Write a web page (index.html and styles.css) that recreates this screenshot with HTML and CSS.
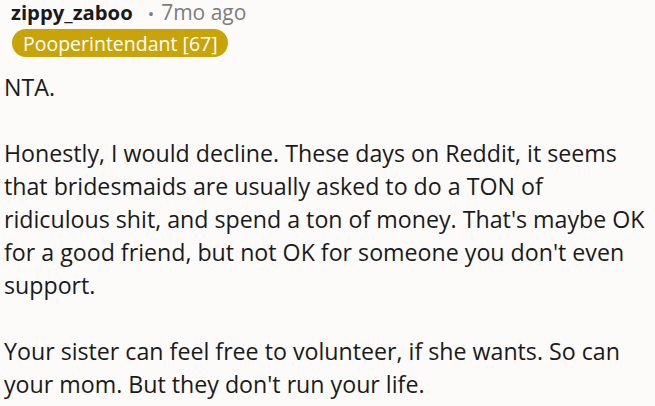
FILE: index.html
```html
<!DOCTYPE html>
<html lang="en">
<head>
<meta charset="utf-8">
<link rel="stylesheet" href="styles.css">
</head>
<body>
<article class="comment">
  <header class="meta">
    <span class="user">zippy_zaboo</span>
    <span class="dot">•</span>
    <span class="time">7mo ago</span>
  </header>
  <div class="flair-row"><span class="flair">Pooperintendant [67]</span></div>
  <div class="body">
    <p>NTA.</p>
    <p>Honestly, I would decline. These days on Reddit, it seems<br>that bridesmaids are usually asked to do a TON of<br>ridiculous shit, and spend a ton of money. That's maybe OK<br>for a good friend, but not OK for someone you don't even<br>support.</p>
    <p>Your sister can feel free to volunteer, if she wants. So can<br>your mom. But they don't run your life.</p>
  </div>
</article>
</body>
</html>
```
FILE: styles.css
```css
html, body {
  margin: 0;
  padding: 0;
  background: #fcfbfa;
  overflow: hidden;
}
.comment {
  font-family: "Open Sans", "Noto Sans", sans-serif;
  color: #1a1a1b;
}
.meta {
  display: flex;
  align-items: baseline;
  padding: 0 0 0 11px;
  font-size: 20.3px;
  line-height: 25px;
  white-space: nowrap;
}
.user {
  font-weight: 700;
  color: #1a1a1b;
}
.dot {
  color: #7c7c7c;
  margin: 0 7px 0 15px;
  font-size: 17px;
}
.time {
  color: #7c7c7c;
  font-size: 21px;
}
.flair-row {
  display: flex;
  padding-left: 12px;
  margin-top: 3px;
}
.flair {
  background: #c9a408;
  color: #ffffff;
  font-size: 19.5px;
  line-height: 26px;
  padding: 2px 10px 0 11px;
  border-radius: 14px;
  white-space: nowrap;
}
.body {
  margin-top: 14px;
  padding-left: 4px;
  font-size: 23.2px;
  line-height: 33px;
}
.body p {
  margin: 0 0 33px;
  white-space: nowrap;
}
.body p:last-child {
  margin-bottom: 0;
}
```
